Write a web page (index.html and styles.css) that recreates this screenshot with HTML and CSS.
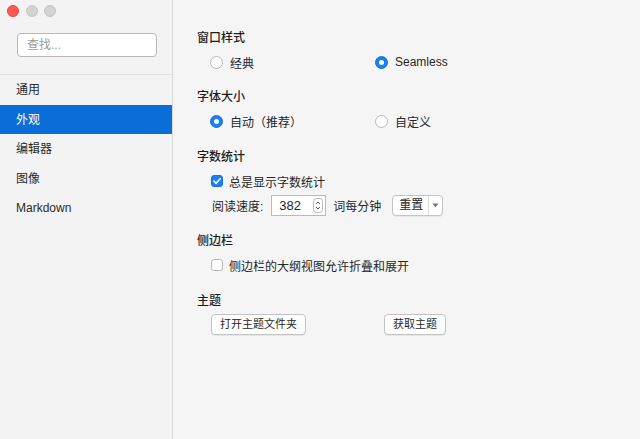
FILE: index.html
```html
<!DOCTYPE html>
<html lang="zh">
<head>
<meta charset="utf-8">
<title>偏好设置</title>
<link rel="stylesheet" href="styles.css">
</head>
<body>
<div class="window">
  <aside class="sidebar">
    <div class="traffic">
      <span class="light light-close"></span>
      <span class="light light-off"></span>
      <span class="light light-off"></span>
    </div>
    <div class="search-wrap">
      <div class="search">查找...</div>
    </div>
    <ul class="nav">
      <li class="nav-item">通用</li>
      <li class="nav-item is-active">外观</li>
      <li class="nav-item">编辑器</li>
      <li class="nav-item">图像</li>
      <li class="nav-item">Markdown</li>
    </ul>
  </aside>

  <main class="content">
    <section class="group">
      <h2 class="group-title">窗口样式</h2>
      <div class="radio-row">
        <label class="option"><span class="radio"></span><span>经典</span></label>
        <label class="option"><span class="radio is-on"></span><span>Seamless</span></label>
      </div>
    </section>

    <section class="group">
      <h2 class="group-title">字体大小</h2>
      <div class="radio-row">
        <label class="option"><span class="radio is-on"></span><span>自动（推荐）</span></label>
        <label class="option"><span class="radio"></span><span>自定义</span></label>
      </div>
    </section>

    <section class="group group-count">
      <h2 class="group-title">字数统计</h2>
      <label class="option check-row">
        <span class="checkbox is-on">
          <svg viewBox="0 0 12 12" width="12" height="12"><path d="M3 6.2 L5.1 8.3 L9.2 3.8" fill="none" stroke="#fff" stroke-width="1.7" stroke-linecap="round" stroke-linejoin="round"/></svg>
        </span>
        <span>总是显示字数统计</span>
      </label>
      <div class="speed-row">
        <span class="speed-label">阅读速度:</span>
        <div class="number-field">
          <span class="number-value">382</span>
          <span class="stepper">
            <svg viewBox="0 0 10 15" width="10" height="15"><rect x="0.5" y="0.5" width="9" height="14" rx="3" fill="#fff" stroke="#b9b9b9"/><path d="M3 6 L5 4 L7 6" fill="none" stroke="#555" stroke-width="1"/><path d="M3 9 L5 11 L7 9" fill="none" stroke="#555" stroke-width="1"/></svg>
          </span>
        </div>
        <span class="speed-unit">词每分钟</span>
        <div class="split-button">
          <span class="split-main">重置</span>
          <span class="split-arrow">
            <svg viewBox="0 0 7 5" width="7" height="5"><path d="M0.5 0.5 L6.5 0.5 L3.5 4.5 Z" fill="#777"/></svg>
          </span>
        </div>
      </div>
    </section>

    <section class="group group-sidebar">
      <h2 class="group-title">侧边栏</h2>
      <label class="option check-row">
        <span class="checkbox"></span>
        <span>侧边栏的大纲视图允许折叠和展开</span>
      </label>
    </section>

    <section class="group group-theme">
      <h2 class="group-title">主题</h2>
      <div class="button-row">
        <button class="push">打开主题文件夹</button>
        <button class="push">获取主题</button>
      </div>
    </section>
  </main>
</div>
</body>
</html>
```

FILE: styles.css
```css
* { box-sizing: border-box; }

html, body {
  margin: 0;
  padding: 0;
  width: 640px;
  height: 439px;
  overflow: hidden;
}

body {
  font-family: "Liberation Sans", "Noto Sans CJK SC", sans-serif;
  font-size: 12px;
  color: #262626;
  background: #f5f5f5;
}

.window {
  display: flex;
  width: 640px;
  height: 439px;
}

/* ---------- sidebar ---------- */
.sidebar {
  width: 173px;
  flex: none;
  background: #f3f3f3;
  border-right: 1px solid #d9d9d9;
  display: flex;
  flex-direction: column;
}

.traffic {
  display: flex;
  gap: 6.5px;
  padding: 4.5px 0 0 7px;
  height: 33px;
}

.light {
  width: 12px;
  height: 12px;
  border-radius: 50%;
}

.light-close {
  background: #fd5a52;
  border: 0.5px solid #e2463f;
}

.light-off {
  background: #d3d3d3;
  border: 0.5px solid #c4c4c4;
}

.search-wrap {
  padding: 0 15px 0 17px;
  height: 42px;
  border-bottom: 1px solid #dedede;
}

.search {
  height: 24px;
  background: #fff;
  border: 1px solid #b7b7b7;
  border-radius: 4px;
  padding-left: 9px;
  line-height: 22px;
  color: #9a9a9a;
}

.nav {
  list-style: none;
  margin: 0;
  padding: 0;
}

.nav-item {
  height: 29.5px;
  line-height: 31px;
  padding-left: 16px;
  color: #2a2a2a;
}

.nav-item.is-active {
  background: #0b6dd7;
  color: #fff;
}

/* ---------- content ---------- */
.content {
  flex: 1;
  padding: 28px 0 0 24px;
  display: flex;
  flex-direction: column;
}

.group + .group {
  margin-top: 15px;
}

.group-count {
  margin-top: 16px !important;
}

.group-sidebar {
  margin-top: 14px !important;
}

.group-theme {
  margin-top: 16px !important;
}

.group-title {
  margin: 0 0 4px;
  font-size: 12px;
  line-height: 20px;
  font-weight: 500;
  color: #1e1e1e;
}

.radio-row {
  display: grid;
  grid-template-columns: 165px auto;
  padding-left: 13px;
  height: 20px;
}

.option {
  display: flex;
  align-items: center;
  gap: 7px;
  height: 20px;
}

.radio {
  width: 13px;
  height: 13px;
  border-radius: 50%;
  background: #fff;
  border: 1px solid #b8b8b8;
  flex: none;
  position: relative;
}

.radio.is-on {
  background: #1a7fef;
  border-color: #1474e0;
}

.radio.is-on::after {
  content: "";
  position: absolute;
  left: 50%;
  top: 50%;
  width: 5px;
  height: 5px;
  margin: -2.5px 0 0 -2.5px;
  border-radius: 50%;
  background: #fff;
}

.check-row {
  padding-left: 14px;
  gap: 6px;
}

.group-sidebar .check-row {
  margin-top: 4px;
}

.checkbox {
  width: 12px;
  height: 12px;
  border-radius: 3px;
  background: #fff;
  border: 1px solid #b8b8b8;
  flex: none;
  display: flex;
}

.checkbox.is-on {
  background: #1a7fef;
  border-color: #1474e0;
}

.checkbox svg {
  margin: -1px;
}

.speed-row {
  display: flex;
  align-items: center;
  height: 24px;
  margin-top: 2px;
  padding-left: 15px;
}

.speed-label {
  margin-right: 8px;
}

.number-field {
  width: 55px;
  height: 21px;
  background: #fff;
  border: 1px solid #b9b9b9;
  display: flex;
  align-items: center;
  justify-content: space-between;
  padding: 0 2px 0 7px;
  font-size: 13px;
}

.stepper {
  display: flex;
}

.speed-unit {
  margin-left: 7px;
}

.split-button {
  margin-left: 11px;
  height: 21px;
  width: 51px;
  display: flex;
  background: #fff;
  border: 1px solid #c3c3c3;
  border-radius: 4px;
  box-shadow: 0 1px 0 rgba(0,0,0,0.06);
}

.split-main {
  width: 36px;
  text-align: center;
  line-height: 19px;
  padding-left: 1px;
  border-right: 1px solid #d8d8d8;
}

.split-arrow {
  flex: 1;
  display: flex;
  align-items: center;
  justify-content: center;
}

.button-row {
  display: grid;
  grid-template-columns: 173px auto;
  padding-left: 14px;
  margin-top: -1px;
}

.push {
  justify-self: start;
  font-family: inherit;
  font-size: 11px;
  color: #262626;
  height: 21px;
  padding: 0 8px;
  background: #fff;
  border: 1px solid #c3c3c3;
  border-radius: 4px;
  box-shadow: 0 1px 0 rgba(0,0,0,0.06);
  line-height: 19px;
}
```
